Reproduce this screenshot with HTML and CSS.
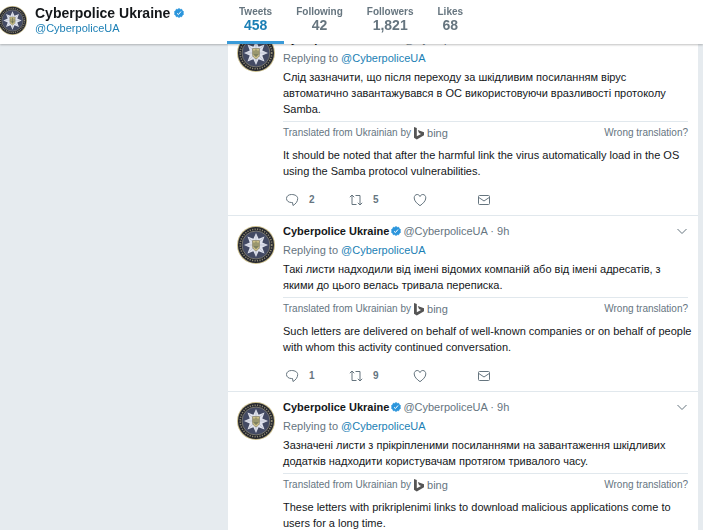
FILE: index.html
```html
<!DOCTYPE html>
<html lang="en">
<head>
  <meta charset="utf-8">
  <title>Cyberpolice Ukraine</title>
  <link rel="stylesheet" href="styles.css">
</head>
<body>
  <svg class="sprite" aria-hidden="true">
    <symbol id="avatar" viewBox="0 0 38 38">
      <circle cx="19" cy="19" r="19" fill="#c9bd8c"/>
      <circle cx="19" cy="19" r="18" fill="#24262e"/>
      <circle cx="19" cy="19" r="15.8" fill="none" stroke="#8d8871" stroke-width="1.6" stroke-dasharray="1.2 1.3"/>
      <circle cx="19" cy="19" r="14" fill="#434a63" stroke="#8f8b78" stroke-width="0.7"/>
      <path d="M19 7l2.6 5.7 5.9-2.2-2.2 5.9L31 19l-5.7 2.6 2.2 5.9-5.9-2.2L19 31l-2.6-5.700-5.900 2.200 2.200-5.900L7 19l5.700-2.600-2.200-5.900 5.900 2.200z" fill="#dfe2ec"/>
      <path d="M19 9v20M9 19h20M12 12l14 14M26 12L12 26" stroke="#b4b9ca" stroke-width="0.6"/>
      <path d="M15.500 14.500h7v6c0 2-1.500 3.200-3.500 4.500-2-1.300-3.500-2.500-3.500-4.500z" fill="#cdc088" stroke="#77745a" stroke-width="0.6"/>
      <path d="M17 16.500v4.500h4v-4.500M19 15.500v7.500" fill="none" stroke="#5d6650" stroke-width="0.9"/>
    </symbol>
    <symbol id="verified" viewBox="0 0 20 20">
      <path d="M10 1l2.500 1.800 3-.2 1 2.900 2.500 1.700-.9 2.800.9 2.800-2.500 1.700-1 2.900-3-.2L10 19l-2.500-1.800-3 .2-1-2.900L1 12.800l.9-2.800L1 7.200l2.500-1.700 1-2.900 3 .2z" fill="#2b95dc" stroke="#2b95dc" stroke-width="1.500" stroke-linejoin="round"/>
      <path d="M6 10.500l2.800 2.700L14 7" fill="none" stroke="#fff" stroke-width="2"/>
    </symbol>
    <symbol id="bing" viewBox="0 0 12 14">
      <path d="M1 1l2.800 1v8.200L8 7.900 6 7 4.800 4.100 11 6.300v3L3.800 13.400 1 11.800z" fill="#555"/>
    </symbol>
    <symbol id="reply" viewBox="0 0 14 14">
      <path d="M6.500 1.500C3.500 1.500 1.500 3.200 1.500 5.500s2 4 4.800 4h1.200l.5 3c2.700-1.500 4.700-4 4.700-7 0-2.300-2.500-4-6.200-4z"/>
    </symbol>
    <symbol id="retweet" viewBox="0 0 14 14">
      <path d="M.8 4.200L3 2l2.200 2.200M3 2v9.500h4.500M6.500 2.500H11V12M8.800 9.800L11 12l2.200-2.200"/>
    </symbol>
    <symbol id="like" viewBox="0 0 14 14">
      <path d="M7 12.700C4 10.500 1.200 8 1.200 4.900c0-2 1.300-3.400 3-3.400C5.500 1.500 6.500 2.300 7 3.600c.5-1.300 1.500-2.100 2.800-2.100 1.700 0 3 1.400 3 3.400 0 3.100-2.800 5.600-5.800 7.800z"/>
    </symbol>
    <symbol id="message" viewBox="0 0 14 14">
      <path d="M2.500 2.500h9a1 1 0 0 1 1 1v7a1 1 0 0 1-1 1h-9a1 1 0 0 1-1-1v-7a1 1 0 0 1 1-1zM1.800 4.500L7 8l5.200-3.500"/>
    </symbol>
    <symbol id="caret" viewBox="0 0 12 12">
      <path d="M1.500 4L6 8.500 10.500 4"/>
    </symbol>
  </svg>

  <header class="topbar">
    <div class="profile">
      <svg class="profile-avatar"><use href="#avatar"/></svg>
      <div class="profile-text">
        <div class="profile-name">Cyberpolice Ukraine <svg class="verified"><use href="#verified"/></svg></div>
        <a class="handle-link" href="#">@CyberpoliceUA</a>
      </div>
    </div>
    <nav class="stats">
      <a class="stat active" href="#"><span class="stat-label">Tweets</span><span class="stat-value">458</span></a>
      <a class="stat" href="#"><span class="stat-label">Following</span><span class="stat-value">42</span></a>
      <a class="stat" href="#"><span class="stat-label">Followers</span><span class="stat-value">1,821</span></a>
      <a class="stat" href="#"><span class="stat-label">Likes</span><span class="stat-value">68</span></a>
    </nav>
  </header>

  <main class="feed">
    <article class="tweet">
      <svg class="avatar"><use href="#avatar"/></svg>
      <div class="content">
        <div class="tweet-header">
          <b class="name">Cyberpolice Ukraine</b>
          <svg class="verified"><use href="#verified"/></svg>
          <span class="meta">@CyberpoliceUA · 9h</span>
        </div>
        <div class="replying">Replying to <a class="handle-link" href="#">@CyberpoliceUA</a></div>
        <p class="text" lang="uk">Слід зазначити, що після переходу за шкідливим посиланням вірус автоматично завантажувався в ОС використовуючи вразливості протоколу Samba.</p>
        <div class="translated">
          <span>Translated from Ukrainian by</span>
          <svg class="bing-logo"><use href="#bing"/></svg>
          <span class="bing-name">bing</span>
          <a class="wrong" href="#">Wrong translation?</a>
        </div>
        <p class="text">It should be noted that after the harmful link the virus automatically load in the OS using the Samba protocol vulnerabilities.</p>
        <div class="actions">
          <button type="button" class="action" aria-label="Reply"><svg><use href="#reply"/></svg>2</button>
          <button type="button" class="action" aria-label="Retweet"><svg><use href="#retweet"/></svg>5</button>
          <button type="button" class="action" aria-label="Like"><svg><use href="#like"/></svg></button>
          <button type="button" class="action" aria-label="Message"><svg><use href="#message"/></svg></button>
        </div>
      </div>
    </article>

    <article class="tweet">
      <svg class="avatar"><use href="#avatar"/></svg>
      <div class="content">
        <div class="tweet-header">
          <b class="name">Cyberpolice Ukraine</b>
          <svg class="verified"><use href="#verified"/></svg>
          <span class="meta">@CyberpoliceUA · 9h</span>
          <button type="button" class="more" aria-label="More"><svg><use href="#caret"/></svg></button>
        </div>
        <div class="replying">Replying to <a class="handle-link" href="#">@CyberpoliceUA</a></div>
        <p class="text" lang="uk">Такі листи надходили від імені відомих компаній або від імені адресатів, з якими до цього велась тривала переписка.</p>
        <div class="translated">
          <span>Translated from Ukrainian by</span>
          <svg class="bing-logo"><use href="#bing"/></svg>
          <span class="bing-name">bing</span>
          <a class="wrong" href="#">Wrong translation?</a>
        </div>
        <p class="text">Such letters are delivered on behalf of well-known companies or on behalf of people with whom this activity continued conversation.</p>
        <div class="actions">
          <button type="button" class="action" aria-label="Reply"><svg><use href="#reply"/></svg>1</button>
          <button type="button" class="action" aria-label="Retweet"><svg><use href="#retweet"/></svg>9</button>
          <button type="button" class="action" aria-label="Like"><svg><use href="#like"/></svg></button>
          <button type="button" class="action" aria-label="Message"><svg><use href="#message"/></svg></button>
        </div>
      </div>
    </article>

    <article class="tweet">
      <svg class="avatar"><use href="#avatar"/></svg>
      <div class="content">
        <div class="tweet-header">
          <b class="name">Cyberpolice Ukraine</b>
          <svg class="verified"><use href="#verified"/></svg>
          <span class="meta">@CyberpoliceUA · 9h</span>
          <button type="button" class="more" aria-label="More"><svg><use href="#caret"/></svg></button>
        </div>
        <div class="replying">Replying to <a class="handle-link" href="#">@CyberpoliceUA</a></div>
        <p class="text" lang="uk">Зазначені листи з прікріпленими посиланнями на завантаження шкідливих додатків надходити користувачам протягом тривалого часу.</p>
        <div class="translated">
          <span>Translated from Ukrainian by</span>
          <svg class="bing-logo"><use href="#bing"/></svg>
          <span class="bing-name">bing</span>
          <a class="wrong" href="#">Wrong translation?</a>
        </div>
        <p class="text">These letters with prikriplenimi links to download malicious applications come to users for a long time.</p>
      </div>
    </article>
  </main>
</body>
</html>
```

FILE: styles.css
```css
body {
  margin: 0;
  background: #e6ebef;
  color: #14171a;
  font-family: "Liberation Sans", Arial, sans-serif;
  font-size: 11px;
  line-height: 16px;
  overflow: hidden;
}

a {
  color: inherit;
  text-decoration: none;
}

button {
  padding: 0;
  border: none;
  background: none;
  font: inherit;
  color: inherit;
  cursor: pointer;
}

.sprite {
  position: absolute;
  width: 0;
  height: 0;
}

.topbar {
  position: fixed;
  top: 0;
  left: 0;
  right: 0;
  z-index: 1;
  display: flex;
  height: 44px;
  background: #fff;
  box-shadow: 0 1px 2px rgba(0, 0, 0, 0.25);
}

.profile {
  display: flex;
  align-items: center;
  gap: 8px;
  box-sizing: border-box;
  width: 227px;
  padding-bottom: 4px;
}

.profile-avatar {
  width: 29px;
  height: 29px;
  margin-left: -2px;
}

.profile-name {
  display: flex;
  align-items: center;
  gap: 4px;
  font-size: 14px;
  font-weight: bold;
}

.profile-text .handle-link {
  display: block;
  line-height: 14px;
}

.verified {
  width: 10px;
  height: 10px;
}

.handle-link {
  color: #1b7fb5;
}

.stats {
  display: flex;
}

.stat {
  box-sizing: border-box;
  padding: 5px 12px 0;
  color: #66757f;
  font-weight: bold;
  text-align: center;
}

.stat.active {
  border-bottom: 3px solid #3a9bd9;
}

.stat-label {
  display: block;
  font-size: 10px;
  line-height: 14px;
}

.stat-value {
  display: block;
  font-size: 14px;
  line-height: 12px;
}

.active .stat-value {
  color: #1b7fb5;
}

.feed {
  margin: 24px 5px 0 228px;
  background: #fff;
}

.tweet {
  display: flex;
  gap: 8px;
  padding: 7px 10px 5px 9px;
  border-bottom: 1px solid #e1e8ed;
}

.avatar {
  flex: none;
  width: 38px;
  height: 38px;
  margin-top: 3px;
}

.content {
  flex: 1;
}

.tweet-header {
  display: flex;
  align-items: center;
  gap: 2px;
  height: 16px;
}

.meta,
.replying {
  color: #66757f;
}

.more {
  display: flex;
  margin-left: auto;
}

.more svg {
  width: 12px;
  height: 12px;
  fill: none;
  stroke: #66757f;
}

.replying {
  margin-top: 3px;
}

.text {
  margin: 3px -4px 0 0;
}

.translated {
  display: flex;
  align-items: center;
  gap: 2px;
  height: 22px;
  margin-top: 4px;
  border-top: 1px solid #e1e8ed;
  color: #66757f;
  font-size: 10px;
}

.bing-logo {
  width: 12px;
  height: 14px;
}

.bing-name {
  font-size: 11px;
}

.wrong {
  margin-left: auto;
}

.actions {
  display: flex;
  height: 20px;
  margin-top: 11px;
}

.action {
  display: flex;
  align-items: center;
  gap: 10px;
  width: 64px;
  padding-left: 2px;
  color: #66757f;
  font-size: 10px;
  font-weight: bold;
}

.action svg {
  width: 14px;
  height: 14px;
  fill: none;
  stroke: #66757f;
}
```
